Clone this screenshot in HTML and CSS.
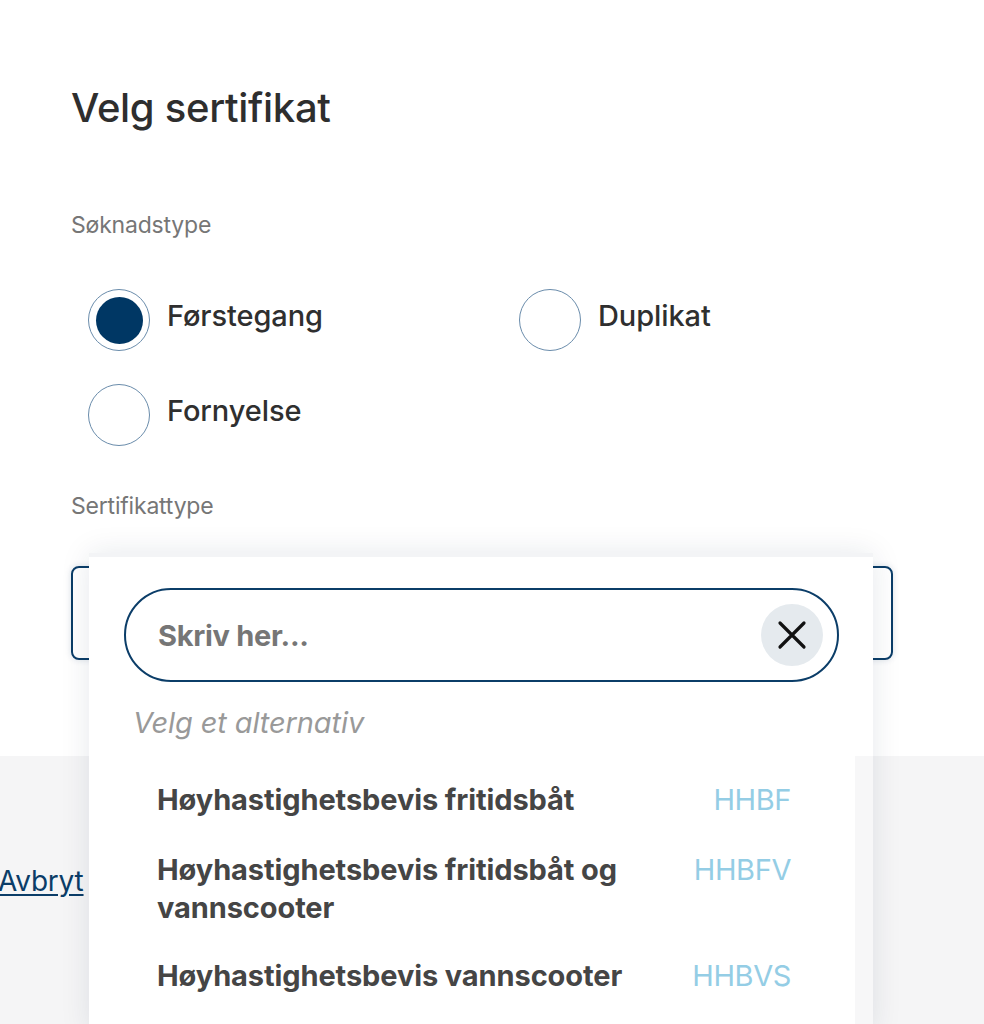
FILE: index.html
```html
<!DOCTYPE html>
<html lang="no">
<head>
<meta charset="utf-8">
<title>Velg sertifikat</title>
<link rel="stylesheet" href="styles.css">
</head>
<body>
<main class="page">
  <section class="form">
    <h1 class="title">Velg sertifikat</h1>
    <div class="label">Søknadstype</div>
    <div class="radios">
      <label class="radio"><span class="dot checked"></span><span class="radio-text">Førstegang</span></label>
      <label class="radio"><span class="dot"></span><span class="radio-text">Duplikat</span></label>
      <label class="radio"><span class="dot"></span><span class="radio-text">Fornyelse</span></label>
    </div>
    <div class="label label-cert">Sertifikattype</div>
    <div class="select"></div>
  </section>
  <footer class="footer">
    <a class="cancel" href="#">Avbryt</a>
  </footer>

  <div class="dropdown">
    <div class="search">
      <span class="placeholder">Skriv her...</span>
      <span class="clear">
        <svg width="30" height="30" viewBox="0 0 30 30" aria-hidden="true"><path d="M3 3 L27 27 M27 3 L3 27" stroke="#111" stroke-width="3.2" stroke-linecap="round"/></svg>
      </span>
    </div>
    <div class="hint">Velg et alternativ</div>
    <div class="list">
      <ul class="options">
        <li class="option"><span class="opt-name">Høyhastighetsbevis fritidsbåt</span><span class="opt-code">HHBF</span></li>
        <li class="option"><span class="opt-name">Høyhastighetsbevis fritidsbåt og vannscooter</span><span class="opt-code">HHBFV</span></li>
        <li class="option"><span class="opt-name">Høyhastighetsbevis vannscooter</span><span class="opt-code">HHBVS</span></li>
      </ul>
      <div class="track"></div>
    </div>
  </div>
</main>
</body>
</html>
```

FILE: styles.css
```css
* { box-sizing: border-box; }
html, body { margin: 0; padding: 0; }
body {
  font-family: Inter, Lato, Arial, sans-serif;
  color: #2f2f2f;
  background: #fff;
  width: 984px;
  height: 1024px;
  overflow: hidden;
}
.page { position: relative; min-height: 1024px; }

.form {
  padding: 80px 0 0 71px;
  height: 756px;
  background: #fff;
}
.title {
  margin: 0;
  font-size: 40px;
  font-weight: 500;
  line-height: 56px;
  color: #2e2e2e;
  letter-spacing: -0.3px;
}
.label {
  margin-top: 75px;
  font-size: 23px;
  line-height: 28px;
  color: #767676;
  letter-spacing: -0.2px;
}
.radios {
  margin-top: 50px;
  margin-left: 17px;
  display: grid;
  grid-template-columns: 431px 431px;
  row-gap: 33px;
}
.radio { display: flex; align-items: center; gap: 17px; cursor: pointer; }
.dot {
  width: 62px; height: 62px;
  border-radius: 50%;
  border: 1.5px solid #6a8cab;
  display: flex; align-items: center; justify-content: center;
  flex: none;
}
.dot.checked::after {
  content: "";
  width: 47px; height: 47px;
  border-radius: 50%;
  background: #003764;
}
.radio-text { font-size: 29px; font-weight: 500; color: #2f2f2f; letter-spacing: -0.1px; margin-top: -10px; }

.label-cert { margin-top: 46px; }
.select {
  margin-top: 46px;
  width: 822px;
  height: 94px;
  border: 2px solid #0b3d68;
  border-radius: 8px;
  box-shadow: 0 0 6px rgba(0, 55, 100, 0.15);
}

.footer {
  background: #f5f5f6;
  height: 268px;
  padding-top: 108px;
}
.cancel {
  font-size: 28px;
  color: #0b3d68;
  text-decoration: underline;
  text-underline-offset: 3px;
  margin-left: -2px;
  letter-spacing: -0.2px;
}

.dropdown {
  position: absolute;
  left: 89px;
  top: 553px;
  width: 784px;
  height: 480px;
  background: #fff;
  border-top: 4px solid #f3f4f6;
  box-shadow: 0 0 28px rgba(20, 40, 70, 0.10);
  padding: 31px 34px 0 35px;
}
.search {
  height: 94px;
  border: 2px solid #0b3d68;
  border-radius: 47px;
  display: flex;
  align-items: center;
  justify-content: space-between;
  padding: 0 14px 0 32px;
}
.placeholder { font-size: 29px; font-weight: 700; color: #767676; letter-spacing: -0.3px; }
.clear {
  width: 62px; height: 62px;
  border-radius: 50%;
  background: #e5eaee;
  display: flex; align-items: center; justify-content: center;
}
.hint {
  margin: 21px 0 0 9px;
  font-size: 29px;
  font-style: italic;
  color: #999;
  line-height: 40px;
  letter-spacing: -0.1px;
}
.list {
  display: flex;
  margin: 13px -34px 0 -35px;
}
.options {
  list-style: none;
  margin: 0;
  padding: 25px 64px 0 68px;
  flex: 1;
}
.option {
  display: flex;
  justify-content: space-between;
  align-items: flex-start;
  gap: 40px;
  margin-bottom: 30px;
}
.option:first-child { margin-bottom: 32px; }
.opt-name {
  font-size: 29px;
  font-weight: 700;
  color: #454545;
  line-height: 38px;
  max-width: 500px;
  letter-spacing: -0.1px;
}
.opt-code {
  font-size: 29px;
  color: #94cde5;
  line-height: 38px;
  letter-spacing: -0.4px;
}
.track { width: 18px; background: #f7f7f8; height: 300px; }
```
